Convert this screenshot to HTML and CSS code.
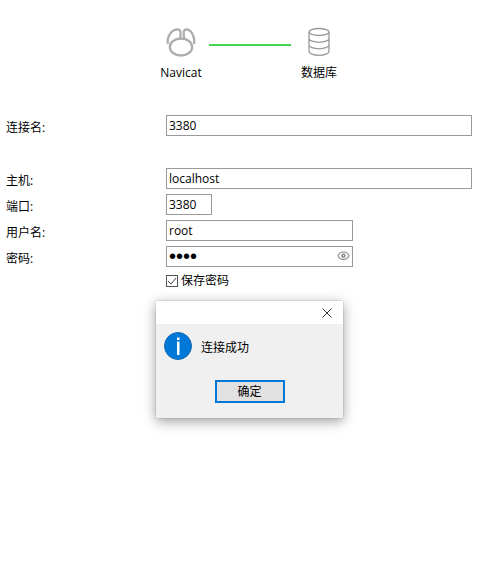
FILE: index.html
```html
<!DOCTYPE html>
<html lang="zh-CN">
<head>
<meta charset="utf-8">
<title>Navicat</title>
<link rel="stylesheet" href="styles.css">
</head>
<body>
<header class="route">
  <div class="node">
    <svg class="node-icon" viewBox="0 0 30 30" fill="none" stroke="#adadad" stroke-width="2.3" stroke-linecap="round" stroke-linejoin="round" aria-hidden="true">
      <ellipse cx="15" cy="20" rx="11.200" ry="8.500"/>
      <path d="M1.700 16C1.200 8.500 6 2.300 11.500 2.300C15 2.300 14.800 5 14.300 11.500"/>
      <path d="M18.300 11.700C17.200 5 17.500 2.300 20.500 2.300C25 2.500 28.800 9 28.300 16"/>
    </svg>
    <span>Navicat</span>
  </div>
  <div class="link"></div>
  <div class="node">
    <svg class="node-icon" viewBox="0 0 30 30" fill="none" stroke="#999" stroke-width="1.300" aria-hidden="true">
      <ellipse cx="15" cy="5" rx="10" ry="3.500"/>
      <path d="M5 5V24.500C5 26.500 9.500 28.300 15 28.300S25 26.500 25 24.500V5M5 11.500C5 13.600 9.500 15.300 15 15.300S25 13.600 25 11.500M5 18C5 20.100 9.500 21.800 15 21.800S25 20.100 25 18"/>
    </svg>
    <span>数据库</span>
  </div>
</header>

<main>
  <form class="form">
    <div class="row row-name">
      <label for="name">连接名:</label>
      <input class="field" id="name" type="text" value="3380">
    </div>
    <div class="row">
      <label for="host">主机:</label>
      <input class="field" id="host" type="text" value="localhost">
    </div>
    <div class="row">
      <label for="port">端口:</label>
      <input class="field field-port" id="port" type="text" value="3380">
    </div>
    <div class="row">
      <label for="user">用户名:</label>
      <input class="field field-medium" id="user" type="text" value="root">
    </div>
    <div class="row">
      <label for="password">密码:</label>
      <div class="password field-medium">
        <input class="field field-secret" id="password" type="password" value="root">
        <button class="reveal" type="button" aria-label="显示密码">
          <svg viewBox="0 0 14 10" fill="none" stroke="#8c8c8c" stroke-width="1.200" aria-hidden="true">
            <path d="M1 5C3.500 -.3 10.500 -.3 13 5C10.500 10.300 3.500 10.300 1 5Z"/>
            <circle cx="7" cy="5" r="1.500" stroke-width="1.800"/>
          </svg>
        </button>
      </div>
    </div>
    <div class="save">
      <input class="check" id="save" type="checkbox" checked>
      <label for="save">保存密码</label>
    </div>
  </form>
</main>

<div class="dialog" role="alertdialog" aria-labelledby="message">
  <div class="titlebar">
    <button class="close" type="button" aria-label="关闭">
      <svg viewBox="0 0 10 10" stroke="#333" fill="none" aria-hidden="true"><path d="M.5 .5L9.500 9.500M9.500 .5L.5 9.500"/></svg>
    </button>
  </div>
  <div class="message">
    <svg class="info" viewBox="0 0 28 28" aria-hidden="true">
      <circle cx="14" cy="14" r="13.500" fill="#0078d7" stroke="#1668ad"/>
      <path d="M13 5.500h2.500v2.500h-2.500zM13 9.500h2.500v13.500h-2.500z" fill="#fff"/>
    </svg>
    <span class="message-text" id="message">连接成功</span>
  </div>
  <button class="confirm" type="button">确定</button>
</div>
</body>
</html>
```
FILE: styles.css
```css
* {
  box-sizing: border-box;
}

body {
  margin: 0;
  position: relative;
  min-height: 100vh;
  background: #fff;
  color: #000;
  font: 12px/16px "Open Sans", "Noto Sans CJK SC", sans-serif;
}

input,
button {
  font: inherit;
  color: inherit;
  margin: 0;
}

svg {
  display: block;
}

.route {
  display: flex;
  justify-content: center;
  padding-top: 27px;
}

.node {
  display: flex;
  flex-direction: column;
  align-items: center;
  gap: 8px;
  width: 56px;
}

.node-icon {
  width: 30px;
  height: 30px;
}

.link {
  width: 82px;
  height: 2px;
  margin-top: 17px;
  background: #42d74c;
}

.form {
  display: flex;
  flex-direction: column;
  gap: 5px;
  padding: 34px 28px 0 6px;
}

.row {
  display: grid;
  grid-template-columns: 160px 1fr;
  align-items: center;
}

.row > label {
  padding-top: 4px;
}

.row-name {
  margin-bottom: 27px;
}

.field {
  width: 100%;
  height: 21px;
  padding: 0 2px;
  border: 1px solid #999;
  background: #fff;
}

.field-port {
  width: 46px;
}

.field-medium {
  width: 187px;
}

.field-secret {
  display: block;
  font-family: "Liberation Sans", sans-serif;
  font-size: 20px;
}

.password {
  position: relative;
}

.reveal {
  position: absolute;
  top: 5px;
  right: 3px;
  width: 13px;
  padding: 0;
  border: 0;
  background: none;
}

.save {
  display: flex;
  align-items: center;
  gap: 3px;
  margin-left: 160px;
  padding-top: 1px;
}

.check {
  appearance: none;
  width: 12px;
  height: 12px;
  border: 1px solid #555;
  background: #fff url("data:image/svg+xml,%3Csvg xmlns='http://www.w3.org/2000/svg' viewBox='0 0 10 10'%3E%3Cpath d='M1 5l3 3 5-6' fill='none' stroke='%23444'/%3E%3C/svg%3E") center / 10px no-repeat;
}

.dialog {
  position: absolute;
  top: 301px;
  left: calc(50% - 94px);
  width: 187px;
  padding-bottom: 15px;
  background: #f0f0f0;
  box-shadow: 0 0 1px #888, 0 3px 12px rgba(0, 0, 0, 0.4);
}

.titlebar {
  display: flex;
  justify-content: flex-end;
  height: 23px;
  background: #fff;
}

.close {
  width: 32px;
  padding: 0 11px;
  border: 0;
  background: none;
}

.message {
  display: flex;
  align-items: center;
  gap: 9px;
  padding: 8px 8px 20px;
}

.message-text {
  padding-top: 3px;
}

.info {
  width: 28px;
  height: 28px;
}

.confirm {
  display: block;
  width: 70px;
  height: 23px;
  margin: 0 auto;
  padding: 0;
  border: 2px solid #0078d7;
  background: #e1e1e1;
}
```
